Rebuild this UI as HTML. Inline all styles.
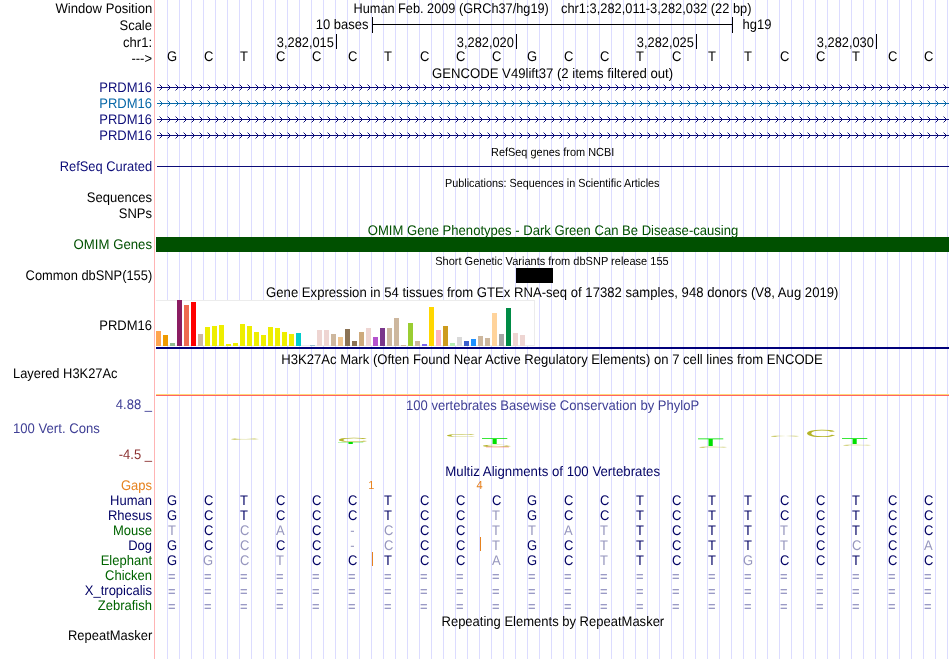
<!DOCTYPE html>
<html lang="en"><head><meta charset="utf-8"><title>UCSC Genome Browser chr1:3,282,011-3,282,032</title>
<style>html,body{margin:0;padding:0;background:#fff}svg{display:block;will-change:transform}</style></head>
<body>
<svg width="950" height="659" viewBox="0 0 950 659" font-family='"Liberation Sans", sans-serif' font-size="13" text-rendering="geometricPrecision">
<rect width="950" height="659" fill="#fff"/>
<path d="M167.5 0V659M179.5 0V659M191.5 0V659M203.5 0V659M215.5 0V659M227.5 0V659M239.5 0V659M251.5 0V659M263.5 0V659M275.5 0V659M287.5 0V659M299.5 0V659M311.5 0V659M323.5 0V659M335.5 0V659M347.5 0V659M359.5 0V659M371.5 0V659M383.5 0V659M395.5 0V659M407.5 0V659M419.5 0V659M431.5 0V659M443.5 0V659M455.5 0V659M467.5 0V659M479.5 0V659M491.5 0V659M503.5 0V659M515.5 0V659M527.5 0V659M539.5 0V659M551.5 0V659M563.5 0V659M575.5 0V659M587.5 0V659M599.5 0V659M611.5 0V659M623.5 0V659M635.5 0V659M647.5 0V659M659.5 0V659M671.5 0V659M683.5 0V659M695.5 0V659M707.5 0V659M719.5 0V659M731.5 0V659M743.5 0V659M755.5 0V659M767.5 0V659M779.5 0V659M791.5 0V659M803.5 0V659M815.5 0V659M827.5 0V659M839.5 0V659M851.5 0V659M863.5 0V659M875.5 0V659M887.5 0V659M899.5 0V659M911.5 0V659M923.5 0V659M935.5 0V659M947.5 0V659" stroke="#dcdcff" stroke-width="1" fill="none" shape-rendering="crispEdges"/>
<rect x="154" y="0" width="1" height="659" fill="#ffb4b4" shape-rendering="crispEdges"/>
<text transform="translate(55.5,12.8) scale(1,1.07)" fill="#000" textLength="96.7" lengthAdjust="spacingAndGlyphs">Window Position</text>
<text transform="translate(152,29.5) scale(1,1.07)" text-anchor="end" fill="#000">Scale</text>
<text transform="translate(152,46.5) scale(1,1.07)" text-anchor="end" fill="#000">chr1:</text>
<text transform="translate(152,63) scale(1,1.07)" text-anchor="end" fill="#000">---&gt;</text>
<text transform="translate(353.5,12.5) scale(1,1.07)" fill="#000" textLength="195.3" lengthAdjust="spacingAndGlyphs">Human Feb. 2009 (GRCh37/hg19)</text>
<text transform="translate(561.0,12.5) scale(1,1.07)" fill="#000" textLength="190.5" lengthAdjust="spacingAndGlyphs">chr1:3,282,011-3,282,032 (22 bp)</text>
<text transform="translate(368.5,29) scale(1,1.07)" text-anchor="end" fill="#000">10 bases</text>
<path d="M372.5 17V33M732.5 17V33M372 24.5H733" stroke="#000" stroke-width="1" fill="none" shape-rendering="crispEdges"/>
<text transform="translate(742.5,29) scale(1,1.07)" fill="#000">hg19</text>
<rect x="336" y="34" width="1" height="15" fill="#000" shape-rendering="crispEdges"/>
<text transform="translate(276.8,46.5) scale(1,1.07)" fill="#000" textLength="57.1" lengthAdjust="spacingAndGlyphs">3,282,015</text>
<rect x="516" y="34" width="1" height="15" fill="#000" shape-rendering="crispEdges"/>
<text transform="translate(456.8,46.5) scale(1,1.07)" fill="#000" textLength="57.1" lengthAdjust="spacingAndGlyphs">3,282,020</text>
<rect x="696" y="34" width="1" height="15" fill="#000" shape-rendering="crispEdges"/>
<text transform="translate(636.8,46.5) scale(1,1.07)" fill="#000" textLength="57.1" lengthAdjust="spacingAndGlyphs">3,282,025</text>
<rect x="876" y="34" width="1" height="15" fill="#000" shape-rendering="crispEdges"/>
<text transform="translate(816.8,46.5) scale(1,1.07)" fill="#000" textLength="57.1" lengthAdjust="spacingAndGlyphs">3,282,030</text>
<text transform="translate(172.05,60.7) scale(1,1.07)" text-anchor="middle" fill="#000">G</text>
<text transform="translate(208.7,60.7) scale(1,1.07)" text-anchor="middle" fill="#000">C</text>
<text transform="translate(244.0,60.7) scale(1,1.07)" text-anchor="middle" fill="#000">T</text>
<text transform="translate(280.7,60.7) scale(1,1.07)" text-anchor="middle" fill="#000">C</text>
<text transform="translate(316.7,60.7) scale(1,1.07)" text-anchor="middle" fill="#000">C</text>
<text transform="translate(352.7,60.7) scale(1,1.07)" text-anchor="middle" fill="#000">C</text>
<text transform="translate(388.0,60.7) scale(1,1.07)" text-anchor="middle" fill="#000">T</text>
<text transform="translate(424.7,60.7) scale(1,1.07)" text-anchor="middle" fill="#000">C</text>
<text transform="translate(460.7,60.7) scale(1,1.07)" text-anchor="middle" fill="#000">C</text>
<text transform="translate(496.7,60.7) scale(1,1.07)" text-anchor="middle" fill="#000">C</text>
<text transform="translate(532.05,60.7) scale(1,1.07)" text-anchor="middle" fill="#000">G</text>
<text transform="translate(568.7,60.7) scale(1,1.07)" text-anchor="middle" fill="#000">C</text>
<text transform="translate(604.7,60.7) scale(1,1.07)" text-anchor="middle" fill="#000">C</text>
<text transform="translate(640.0,60.7) scale(1,1.07)" text-anchor="middle" fill="#000">T</text>
<text transform="translate(676.7,60.7) scale(1,1.07)" text-anchor="middle" fill="#000">C</text>
<text transform="translate(712.0,60.7) scale(1,1.07)" text-anchor="middle" fill="#000">T</text>
<text transform="translate(748.0,60.7) scale(1,1.07)" text-anchor="middle" fill="#000">T</text>
<text transform="translate(784.7,60.7) scale(1,1.07)" text-anchor="middle" fill="#000">C</text>
<text transform="translate(820.7,60.7) scale(1,1.07)" text-anchor="middle" fill="#000">C</text>
<text transform="translate(856.0,60.7) scale(1,1.07)" text-anchor="middle" fill="#000">T</text>
<text transform="translate(892.7,60.7) scale(1,1.07)" text-anchor="middle" fill="#000">C</text>
<text transform="translate(928.7,60.7) scale(1,1.07)" text-anchor="middle" fill="#000">C</text>
<text transform="translate(432.0,77.6) scale(1,1.07)" fill="#000" textLength="241.1" lengthAdjust="spacingAndGlyphs">GENCODE V49lift37 (2 items filtered out)</text>
<text transform="translate(152,92) scale(1,1.07)" text-anchor="end" fill="#0c0c78">PRDM16</text>
<pattern id="cv0" x="155" y="0" width="8" height="7" patternUnits="userSpaceOnUse"><path d="M0 3h8v1h-8zM6 2h1v1h-1zM5 1h1v1h-1zM6 4h1v1h-1zM5 5h1v1h-1z" fill="#0c0c78"/><path d="M4 0h1v1h-1zM4 6h1v1h-1z" fill="#0c0c78" fill-opacity=".45"/></pattern>
<rect transform="translate(0,84)" x="157" y="0" width="792" height="7" fill="url(#cv0)" shape-rendering="crispEdges"/>
<text transform="translate(152,108) scale(1,1.07)" text-anchor="end" fill="#0868a8">PRDM16</text>
<pattern id="cv1" x="155" y="0" width="8" height="7" patternUnits="userSpaceOnUse"><path d="M0 3h8v1h-8zM6 2h1v1h-1zM5 1h1v1h-1zM6 4h1v1h-1zM5 5h1v1h-1z" fill="#0868a8"/><path d="M4 0h1v1h-1zM4 6h1v1h-1z" fill="#0868a8" fill-opacity=".45"/></pattern>
<rect transform="translate(0,100)" x="157" y="0" width="792" height="7" fill="url(#cv1)" shape-rendering="crispEdges"/>
<text transform="translate(152,124) scale(1,1.07)" text-anchor="end" fill="#0c0c78">PRDM16</text>
<pattern id="cv2" x="155" y="0" width="8" height="7" patternUnits="userSpaceOnUse"><path d="M0 3h8v1h-8zM6 2h1v1h-1zM5 1h1v1h-1zM6 4h1v1h-1zM5 5h1v1h-1z" fill="#0c0c78"/><path d="M4 0h1v1h-1zM4 6h1v1h-1z" fill="#0c0c78" fill-opacity=".45"/></pattern>
<rect transform="translate(0,116)" x="157" y="0" width="792" height="7" fill="url(#cv2)" shape-rendering="crispEdges"/>
<text transform="translate(152,140) scale(1,1.07)" text-anchor="end" fill="#0c0c78">PRDM16</text>
<pattern id="cv3" x="155" y="0" width="8" height="7" patternUnits="userSpaceOnUse"><path d="M0 3h8v1h-8zM6 2h1v1h-1zM5 1h1v1h-1zM6 4h1v1h-1zM5 5h1v1h-1z" fill="#0c0c78"/><path d="M4 0h1v1h-1zM4 6h1v1h-1z" fill="#0c0c78" fill-opacity=".45"/></pattern>
<rect transform="translate(0,132)" x="157" y="0" width="792" height="7" fill="url(#cv3)" shape-rendering="crispEdges"/>
<text transform="translate(491.0,156) scale(1,1.07)" fill="#000" font-size="11" textLength="123.3" lengthAdjust="spacingAndGlyphs">RefSeq genes from NCBI</text>
<text transform="translate(59.7,171) scale(1,1.07)" fill="#0c0c78" textLength="92.5" lengthAdjust="spacingAndGlyphs">RefSeq Curated</text>
<rect x="157" y="166" width="792" height="1" fill="#0c0c78" shape-rendering="crispEdges"/>
<text transform="translate(445.0,186.5) scale(1,1.07)" fill="#000" font-size="11" textLength="214.5" lengthAdjust="spacingAndGlyphs">Publications: Sequences in Scientific Articles</text>
<text transform="translate(86.7,202) scale(1,1.07)" fill="#000" textLength="65.3" lengthAdjust="spacingAndGlyphs">Sequences</text>
<text transform="translate(152,217.5) scale(1,1.07)" text-anchor="end" fill="#000">SNPs</text>
<text transform="translate(367.8,235) scale(1,1.07)" fill="#005000" textLength="370.5" lengthAdjust="spacingAndGlyphs">OMIM Gene Phenotypes - Dark Green Can Be Disease-causing</text>
<text transform="translate(73.6,248.6) scale(1,1.07)" fill="#005000" textLength="78.4" lengthAdjust="spacingAndGlyphs">OMIM Genes</text>
<rect x="156" y="237" width="793" height="15" fill="#005000" shape-rendering="crispEdges"/>
<text transform="translate(435.2,264.6) scale(1,1.07)" fill="#000" font-size="11" textLength="233.5" lengthAdjust="spacingAndGlyphs">Short Genetic Variants from dbSNP release 155</text>
<text transform="translate(25.6,279.8) scale(1,1.07)" fill="#000" textLength="126.6" lengthAdjust="spacingAndGlyphs">Common dbSNP(155)</text>
<rect x="516" y="268" width="37" height="15" fill="#000" shape-rendering="crispEdges"/>
<text transform="translate(266.1,296.6) scale(1,1.07)" fill="#000" textLength="572.3" lengthAdjust="spacingAndGlyphs">Gene Expression in 54 tissues from GTEx RNA-seq of 17382 samples, 948 donors (V8, Aug 2019)</text>
<text transform="translate(152,329.5) scale(1,1.07)" text-anchor="end" fill="#000">PRDM16</text>
<rect x="156" y="300" width="379" height="46" fill="#fff" shape-rendering="crispEdges"/>
<path d="M156 300.5H534.5V345.5H156" stroke="#ececec" fill="none" shape-rendering="crispEdges"/>
<rect x="156" y="331" width="5" height="15" fill="#FFA54F" shape-rendering="crispEdges"/>
<rect x="163" y="335" width="5" height="11" fill="#EE9A00" shape-rendering="crispEdges"/>
<rect x="170" y="343" width="5" height="3" fill="#8FBC8F" shape-rendering="crispEdges"/>
<rect x="177" y="300" width="5" height="46" fill="#8B1C62" shape-rendering="crispEdges"/>
<rect x="184" y="305" width="5" height="41" fill="#EE6A50" shape-rendering="crispEdges"/>
<rect x="191" y="302" width="5" height="44" fill="#FF0000" shape-rendering="crispEdges"/>
<rect x="198" y="334" width="5" height="12" fill="#CDB79E" shape-rendering="crispEdges"/>
<rect x="205" y="327" width="5" height="19" fill="#EEEE00" shape-rendering="crispEdges"/>
<rect x="212" y="326" width="5" height="20" fill="#EEEE00" shape-rendering="crispEdges"/>
<rect x="219" y="325" width="5" height="21" fill="#EEEE00" shape-rendering="crispEdges"/>
<rect x="226" y="344" width="5" height="2" fill="#EEEE00" shape-rendering="crispEdges"/>
<rect x="233" y="343" width="5" height="3" fill="#EEEE00" shape-rendering="crispEdges"/>
<rect x="240" y="324" width="5" height="22" fill="#EEEE00" shape-rendering="crispEdges"/>
<rect x="247" y="326" width="5" height="20" fill="#EEEE00" shape-rendering="crispEdges"/>
<rect x="254" y="332" width="5" height="14" fill="#EEEE00" shape-rendering="crispEdges"/>
<rect x="261" y="335" width="5" height="11" fill="#EEEE00" shape-rendering="crispEdges"/>
<rect x="268" y="327" width="5" height="19" fill="#EEEE00" shape-rendering="crispEdges"/>
<rect x="275" y="328" width="5" height="18" fill="#EEEE00" shape-rendering="crispEdges"/>
<rect x="282" y="332" width="5" height="14" fill="#EEEE00" shape-rendering="crispEdges"/>
<rect x="289" y="334" width="5" height="12" fill="#EEEE00" shape-rendering="crispEdges"/>
<rect x="296" y="333" width="5" height="13" fill="#00CDCD" shape-rendering="crispEdges"/>
<rect x="310" y="345" width="5" height="1" fill="#9AC0CD" shape-rendering="crispEdges"/>
<rect x="317" y="330" width="5" height="16" fill="#EED5D2" shape-rendering="crispEdges"/>
<rect x="324" y="330" width="5" height="16" fill="#EED5D2" shape-rendering="crispEdges"/>
<rect x="331" y="334" width="5" height="12" fill="#CDB79E" shape-rendering="crispEdges"/>
<rect x="338" y="337" width="5" height="9" fill="#EEC591" shape-rendering="crispEdges"/>
<rect x="345" y="329" width="5" height="17" fill="#8B7355" shape-rendering="crispEdges"/>
<rect x="352" y="341" width="5" height="5" fill="#8B7355" shape-rendering="crispEdges"/>
<rect x="359" y="332" width="5" height="14" fill="#CDAA7D" shape-rendering="crispEdges"/>
<rect x="366" y="328" width="5" height="18" fill="#EED5D2" shape-rendering="crispEdges"/>
<rect x="373" y="337" width="5" height="9" fill="#B452CD" shape-rendering="crispEdges"/>
<rect x="380" y="328" width="5" height="18" fill="#7A378B" shape-rendering="crispEdges"/>
<rect x="387" y="328" width="5" height="18" fill="#CDB79E" shape-rendering="crispEdges"/>
<rect x="394" y="318" width="5" height="28" fill="#CDB79E" shape-rendering="crispEdges"/>
<rect x="401" y="345" width="5" height="1" fill="#CDB79E" shape-rendering="crispEdges"/>
<rect x="408" y="323" width="5" height="23" fill="#9ACD32" shape-rendering="crispEdges"/>
<rect x="415" y="341" width="5" height="5" fill="#CDB79E" shape-rendering="crispEdges"/>
<rect x="422" y="344" width="5" height="2" fill="#7A67EE" shape-rendering="crispEdges"/>
<rect x="429" y="307" width="5" height="39" fill="#FFD700" shape-rendering="crispEdges"/>
<rect x="436" y="330" width="5" height="16" fill="#FFB6C1" shape-rendering="crispEdges"/>
<rect x="443" y="326" width="5" height="20" fill="#CD9B1D" shape-rendering="crispEdges"/>
<rect x="450" y="343" width="5" height="3" fill="#B4EEB4" shape-rendering="crispEdges"/>
<rect x="457" y="337" width="5" height="9" fill="#D9D9D9" shape-rendering="crispEdges"/>
<rect x="464" y="341" width="5" height="5" fill="#3A5FCD" shape-rendering="crispEdges"/>
<rect x="471" y="339" width="5" height="7" fill="#1E90FF" shape-rendering="crispEdges"/>
<rect x="478" y="336" width="5" height="10" fill="#CDB79E" shape-rendering="crispEdges"/>
<rect x="485" y="338" width="5" height="8" fill="#CDB79E" shape-rendering="crispEdges"/>
<rect x="492" y="313" width="5" height="33" fill="#FFD39B" shape-rendering="crispEdges"/>
<rect x="499" y="334" width="5" height="12" fill="#A6A6A6" shape-rendering="crispEdges"/>
<rect x="506" y="308" width="5" height="38" fill="#008B45" shape-rendering="crispEdges"/>
<rect x="513" y="333" width="5" height="13" fill="#EED5D2" shape-rendering="crispEdges"/>
<rect x="520" y="335" width="5" height="11" fill="#EED5D2" shape-rendering="crispEdges"/>
<rect x="156" y="347" width="793" height="2" fill="#00007a" shape-rendering="crispEdges"/>
<text transform="translate(281.2,363.5) scale(1,1.07)" fill="#000" textLength="541.6" lengthAdjust="spacingAndGlyphs">H3K27Ac Mark (Often Found Near Active Regulatory Elements) on 7 cell lines from ENCODE</text>
<text transform="translate(13.0,378) scale(1,1.07)" fill="#000" textLength="104.5" lengthAdjust="spacingAndGlyphs">Layered H3K27Ac</text>
<rect x="156" y="394" width="793" height="1" fill="#ffd878" shape-rendering="crispEdges"/>
<rect x="156" y="395" width="793" height="1" fill="#ff6464" shape-rendering="crispEdges"/>
<text transform="translate(406.0,409.5) scale(1,1.07)" fill="#404096" textLength="293.2" lengthAdjust="spacingAndGlyphs">100 vertebrates Basewise Conservation by PhyloP</text>
<text transform="translate(152,408.5) scale(1,1.07)" text-anchor="end" fill="#404096">4.88 _</text>
<text transform="translate(13.0,433) scale(1,1.07)" fill="#404096" textLength="86.8" lengthAdjust="spacingAndGlyphs">100 Vert. Cons</text>
<text transform="translate(152,458.5) scale(1,1.07)" text-anchor="end" fill="#8c3232">-4.5 _</text>
<text transform="translate(228.78,440) scale(4.435,0.270)" font-size="10" fill="#b4b428" fill-opacity="0.8">C</text>
<text transform="translate(336.78,442) scale(4.435,0.608)" font-size="10" fill="#b4b428" fill-opacity="1">C</text>
<text transform="translate(337.11,444) scale(4.474,0.279)" font-size="10" fill="#00e000" fill-opacity="1">T</text>
<text transform="translate(444.78,437.2) scale(4.435,0.419)" font-size="10" fill="#b4b428" fill-opacity="1">C</text>
<text transform="translate(481.11,444) scale(4.474,0.838)" font-size="10" fill="#00e000" fill-opacity="1">T</text>
<text transform="translate(480.78,446.9) scale(4.435,0.324)" font-size="10" fill="#b4b428" fill-opacity="1">C</text>
<rect x="486" y="446.7" width="23" height="0.8" fill="#ff5050" fill-opacity=".45"/>
<text transform="translate(697.11,446.3) scale(4.474,1.089)" font-size="10" fill="#00e000" fill-opacity="1">T</text>
<text transform="translate(696.78,447.8) scale(4.435,0.203)" font-size="10" fill="#b4b428" fill-opacity="0.7">C</text>
<text transform="translate(768.78,437) scale(4.435,0.189)" font-size="10" fill="#b4b428" fill-opacity="0.7">C</text>
<text transform="translate(804.78,437) scale(4.435,1.054)" font-size="10" fill="#b4b428" fill-opacity="1">C</text>
<text transform="translate(841.11,444) scale(4.474,0.838)" font-size="10" fill="#00e000" fill-opacity="1">T</text>
<text transform="translate(840.78,445.5) scale(4.435,0.203)" font-size="10" fill="#b4b428" fill-opacity="0.6">C</text>
<text transform="translate(445.3,475.5) scale(1,1.07)" fill="#000064" textLength="214.8" lengthAdjust="spacingAndGlyphs">Multiz Alignments of 100 Vertebrates</text>
<text transform="translate(152,490) scale(1,1.07)" text-anchor="end" fill="#e6821e">Gaps</text>
<text transform="translate(371.3,489.1) scale(1,1.07)" text-anchor="middle" fill="#e6821e" font-size="11">1</text>
<text transform="translate(479.5,489.1) scale(1,1.07)" text-anchor="middle" fill="#e6821e" font-size="11">4</text>
<rect x="372" y="552" width="1" height="14" fill="#e6821e" shape-rendering="crispEdges"/>
<rect x="480" y="537" width="1" height="14" fill="#e6821e" shape-rendering="crispEdges"/>
<text transform="translate(152,505) scale(1,1.07)" text-anchor="end" fill="#000064">Human</text>
<text transform="translate(172.05,504.5) scale(1,1.07)" text-anchor="middle" fill="#000064">G</text>
<text transform="translate(208.7,504.5) scale(1,1.07)" text-anchor="middle" fill="#000064">C</text>
<text transform="translate(244.0,504.5) scale(1,1.07)" text-anchor="middle" fill="#000064">T</text>
<text transform="translate(280.7,504.5) scale(1,1.07)" text-anchor="middle" fill="#000064">C</text>
<text transform="translate(316.7,504.5) scale(1,1.07)" text-anchor="middle" fill="#000064">C</text>
<text transform="translate(352.7,504.5) scale(1,1.07)" text-anchor="middle" fill="#000064">C</text>
<text transform="translate(388.0,504.5) scale(1,1.07)" text-anchor="middle" fill="#000064">T</text>
<text transform="translate(424.7,504.5) scale(1,1.07)" text-anchor="middle" fill="#000064">C</text>
<text transform="translate(460.7,504.5) scale(1,1.07)" text-anchor="middle" fill="#000064">C</text>
<text transform="translate(496.7,504.5) scale(1,1.07)" text-anchor="middle" fill="#000064">C</text>
<text transform="translate(532.05,504.5) scale(1,1.07)" text-anchor="middle" fill="#000064">G</text>
<text transform="translate(568.7,504.5) scale(1,1.07)" text-anchor="middle" fill="#000064">C</text>
<text transform="translate(604.7,504.5) scale(1,1.07)" text-anchor="middle" fill="#000064">C</text>
<text transform="translate(640.0,504.5) scale(1,1.07)" text-anchor="middle" fill="#000064">T</text>
<text transform="translate(676.7,504.5) scale(1,1.07)" text-anchor="middle" fill="#000064">C</text>
<text transform="translate(712.0,504.5) scale(1,1.07)" text-anchor="middle" fill="#000064">T</text>
<text transform="translate(748.0,504.5) scale(1,1.07)" text-anchor="middle" fill="#000064">T</text>
<text transform="translate(784.7,504.5) scale(1,1.07)" text-anchor="middle" fill="#000064">C</text>
<text transform="translate(820.7,504.5) scale(1,1.07)" text-anchor="middle" fill="#000064">C</text>
<text transform="translate(856.0,504.5) scale(1,1.07)" text-anchor="middle" fill="#000064">T</text>
<text transform="translate(892.7,504.5) scale(1,1.07)" text-anchor="middle" fill="#000064">C</text>
<text transform="translate(928.7,504.5) scale(1,1.07)" text-anchor="middle" fill="#000064">C</text>
<text transform="translate(152,520) scale(1,1.07)" text-anchor="end" fill="#000064">Rhesus</text>
<text transform="translate(172.05,519.5) scale(1,1.07)" text-anchor="middle" fill="#000064">G</text>
<text transform="translate(208.7,519.5) scale(1,1.07)" text-anchor="middle" fill="#000064">C</text>
<text transform="translate(244.0,519.5) scale(1,1.07)" text-anchor="middle" fill="#000064">T</text>
<text transform="translate(280.7,519.5) scale(1,1.07)" text-anchor="middle" fill="#000064">C</text>
<text transform="translate(316.7,519.5) scale(1,1.07)" text-anchor="middle" fill="#000064">C</text>
<text transform="translate(352.7,519.5) scale(1,1.07)" text-anchor="middle" fill="#000064">C</text>
<text transform="translate(388.0,519.5) scale(1,1.07)" text-anchor="middle" fill="#000064">T</text>
<text transform="translate(424.7,519.5) scale(1,1.07)" text-anchor="middle" fill="#000064">C</text>
<text transform="translate(460.7,519.5) scale(1,1.07)" text-anchor="middle" fill="#000064">C</text>
<text transform="translate(496.0,519.5) scale(1,1.07)" text-anchor="middle" fill="#9696be">T</text>
<text transform="translate(532.05,519.5) scale(1,1.07)" text-anchor="middle" fill="#000064">G</text>
<text transform="translate(568.7,519.5) scale(1,1.07)" text-anchor="middle" fill="#000064">C</text>
<text transform="translate(604.7,519.5) scale(1,1.07)" text-anchor="middle" fill="#000064">C</text>
<text transform="translate(640.0,519.5) scale(1,1.07)" text-anchor="middle" fill="#000064">T</text>
<text transform="translate(676.7,519.5) scale(1,1.07)" text-anchor="middle" fill="#000064">C</text>
<text transform="translate(712.0,519.5) scale(1,1.07)" text-anchor="middle" fill="#000064">T</text>
<text transform="translate(748.0,519.5) scale(1,1.07)" text-anchor="middle" fill="#000064">T</text>
<text transform="translate(784.7,519.5) scale(1,1.07)" text-anchor="middle" fill="#000064">C</text>
<text transform="translate(820.7,519.5) scale(1,1.07)" text-anchor="middle" fill="#000064">C</text>
<text transform="translate(856.0,519.5) scale(1,1.07)" text-anchor="middle" fill="#000064">T</text>
<text transform="translate(892.7,519.5) scale(1,1.07)" text-anchor="middle" fill="#000064">C</text>
<text transform="translate(928.7,519.5) scale(1,1.07)" text-anchor="middle" fill="#000064">C</text>
<text transform="translate(152,535) scale(1,1.07)" text-anchor="end" fill="#006400">Mouse</text>
<text transform="translate(172.0,534.5) scale(1,1.07)" text-anchor="middle" fill="#9696be">T</text>
<text transform="translate(208.7,534.5) scale(1,1.07)" text-anchor="middle" fill="#000064">C</text>
<text transform="translate(244.7,534.5) scale(1,1.07)" text-anchor="middle" fill="#9696be">C</text>
<text transform="translate(280.4,534.5) scale(1,1.07)" text-anchor="middle" fill="#9696be">A</text>
<text transform="translate(316.7,534.5) scale(1,1.07)" text-anchor="middle" fill="#000064">C</text>
<text transform="translate(352.3,534.5) scale(1,1.07)" text-anchor="middle" fill="#9696be">-</text>
<text transform="translate(388.7,534.5) scale(1,1.07)" text-anchor="middle" fill="#9696be">C</text>
<text transform="translate(424.7,534.5) scale(1,1.07)" text-anchor="middle" fill="#000064">C</text>
<text transform="translate(460.7,534.5) scale(1,1.07)" text-anchor="middle" fill="#000064">C</text>
<text transform="translate(496.0,534.5) scale(1,1.07)" text-anchor="middle" fill="#9696be">T</text>
<text transform="translate(532.0,534.5) scale(1,1.07)" text-anchor="middle" fill="#9696be">T</text>
<text transform="translate(568.4,534.5) scale(1,1.07)" text-anchor="middle" fill="#9696be">A</text>
<text transform="translate(604.0,534.5) scale(1,1.07)" text-anchor="middle" fill="#9696be">T</text>
<text transform="translate(640.0,534.5) scale(1,1.07)" text-anchor="middle" fill="#000064">T</text>
<text transform="translate(676.7,534.5) scale(1,1.07)" text-anchor="middle" fill="#000064">C</text>
<text transform="translate(712.0,534.5) scale(1,1.07)" text-anchor="middle" fill="#000064">T</text>
<text transform="translate(748.0,534.5) scale(1,1.07)" text-anchor="middle" fill="#000064">T</text>
<text transform="translate(784.0,534.5) scale(1,1.07)" text-anchor="middle" fill="#9696be">T</text>
<text transform="translate(820.7,534.5) scale(1,1.07)" text-anchor="middle" fill="#000064">C</text>
<text transform="translate(856.0,534.5) scale(1,1.07)" text-anchor="middle" fill="#000064">T</text>
<text transform="translate(892.7,534.5) scale(1,1.07)" text-anchor="middle" fill="#000064">C</text>
<text transform="translate(928.7,534.5) scale(1,1.07)" text-anchor="middle" fill="#000064">C</text>
<text transform="translate(152,550) scale(1,1.07)" text-anchor="end" fill="#000064">Dog</text>
<text transform="translate(172.05,549.5) scale(1,1.07)" text-anchor="middle" fill="#000064">G</text>
<text transform="translate(208.7,549.5) scale(1,1.07)" text-anchor="middle" fill="#000064">C</text>
<text transform="translate(244.7,549.5) scale(1,1.07)" text-anchor="middle" fill="#9696be">C</text>
<text transform="translate(280.7,549.5) scale(1,1.07)" text-anchor="middle" fill="#000064">C</text>
<text transform="translate(316.7,549.5) scale(1,1.07)" text-anchor="middle" fill="#000064">C</text>
<text transform="translate(352.3,549.5) scale(1,1.07)" text-anchor="middle" fill="#9696be">-</text>
<text transform="translate(388.7,549.5) scale(1,1.07)" text-anchor="middle" fill="#9696be">C</text>
<text transform="translate(424.7,549.5) scale(1,1.07)" text-anchor="middle" fill="#000064">C</text>
<text transform="translate(460.7,549.5) scale(1,1.07)" text-anchor="middle" fill="#000064">C</text>
<text transform="translate(496.0,549.5) scale(1,1.07)" text-anchor="middle" fill="#9696be">T</text>
<text transform="translate(532.05,549.5) scale(1,1.07)" text-anchor="middle" fill="#000064">G</text>
<text transform="translate(568.7,549.5) scale(1,1.07)" text-anchor="middle" fill="#000064">C</text>
<text transform="translate(604.0,549.5) scale(1,1.07)" text-anchor="middle" fill="#9696be">T</text>
<text transform="translate(640.0,549.5) scale(1,1.07)" text-anchor="middle" fill="#000064">T</text>
<text transform="translate(676.7,549.5) scale(1,1.07)" text-anchor="middle" fill="#000064">C</text>
<text transform="translate(712.0,549.5) scale(1,1.07)" text-anchor="middle" fill="#000064">T</text>
<text transform="translate(748.0,549.5) scale(1,1.07)" text-anchor="middle" fill="#000064">T</text>
<text transform="translate(784.0,549.5) scale(1,1.07)" text-anchor="middle" fill="#9696be">T</text>
<text transform="translate(820.7,549.5) scale(1,1.07)" text-anchor="middle" fill="#000064">C</text>
<text transform="translate(856.7,549.5) scale(1,1.07)" text-anchor="middle" fill="#9696be">C</text>
<text transform="translate(892.7,549.5) scale(1,1.07)" text-anchor="middle" fill="#000064">C</text>
<text transform="translate(928.4,549.5) scale(1,1.07)" text-anchor="middle" fill="#9696be">A</text>
<text transform="translate(152,565) scale(1,1.07)" text-anchor="end" fill="#006400">Elephant</text>
<text transform="translate(172.05,564.5) scale(1,1.07)" text-anchor="middle" fill="#000064">G</text>
<text transform="translate(208.05,564.5) scale(1,1.07)" text-anchor="middle" fill="#9696be">G</text>
<text transform="translate(244.7,564.5) scale(1,1.07)" text-anchor="middle" fill="#9696be">C</text>
<text transform="translate(280.0,564.5) scale(1,1.07)" text-anchor="middle" fill="#9696be">T</text>
<text transform="translate(316.7,564.5) scale(1,1.07)" text-anchor="middle" fill="#000064">C</text>
<text transform="translate(352.7,564.5) scale(1,1.07)" text-anchor="middle" fill="#000064">C</text>
<text transform="translate(388.0,564.5) scale(1,1.07)" text-anchor="middle" fill="#000064">T</text>
<text transform="translate(424.7,564.5) scale(1,1.07)" text-anchor="middle" fill="#000064">C</text>
<text transform="translate(460.7,564.5) scale(1,1.07)" text-anchor="middle" fill="#000064">C</text>
<text transform="translate(496.4,564.5) scale(1,1.07)" text-anchor="middle" fill="#9696be">A</text>
<text transform="translate(532.05,564.5) scale(1,1.07)" text-anchor="middle" fill="#000064">G</text>
<text transform="translate(568.7,564.5) scale(1,1.07)" text-anchor="middle" fill="#000064">C</text>
<text transform="translate(604.0,564.5) scale(1,1.07)" text-anchor="middle" fill="#9696be">T</text>
<text transform="translate(640.0,564.5) scale(1,1.07)" text-anchor="middle" fill="#000064">T</text>
<text transform="translate(676.7,564.5) scale(1,1.07)" text-anchor="middle" fill="#000064">C</text>
<text transform="translate(712.0,564.5) scale(1,1.07)" text-anchor="middle" fill="#000064">T</text>
<text transform="translate(748.05,564.5) scale(1,1.07)" text-anchor="middle" fill="#9696be">G</text>
<text transform="translate(784.7,564.5) scale(1,1.07)" text-anchor="middle" fill="#000064">C</text>
<text transform="translate(820.7,564.5) scale(1,1.07)" text-anchor="middle" fill="#000064">C</text>
<text transform="translate(856.0,564.5) scale(1,1.07)" text-anchor="middle" fill="#000064">T</text>
<text transform="translate(892.7,564.5) scale(1,1.07)" text-anchor="middle" fill="#000064">C</text>
<text transform="translate(928.7,564.5) scale(1,1.07)" text-anchor="middle" fill="#000064">C</text>
<text transform="translate(152,580) scale(1,1.07)" text-anchor="end" fill="#006400">Chicken</text>
<text transform="translate(171.9,581.2) scale(1,1.07)" text-anchor="middle" fill="#7c7cb4">=</text>
<text transform="translate(207.9,581.2) scale(1,1.07)" text-anchor="middle" fill="#7c7cb4">=</text>
<text transform="translate(243.9,581.2) scale(1,1.07)" text-anchor="middle" fill="#7c7cb4">=</text>
<text transform="translate(279.9,581.2) scale(1,1.07)" text-anchor="middle" fill="#7c7cb4">=</text>
<text transform="translate(315.9,581.2) scale(1,1.07)" text-anchor="middle" fill="#7c7cb4">=</text>
<text transform="translate(351.9,581.2) scale(1,1.07)" text-anchor="middle" fill="#7c7cb4">=</text>
<text transform="translate(387.9,581.2) scale(1,1.07)" text-anchor="middle" fill="#7c7cb4">=</text>
<text transform="translate(423.9,581.2) scale(1,1.07)" text-anchor="middle" fill="#7c7cb4">=</text>
<text transform="translate(459.9,581.2) scale(1,1.07)" text-anchor="middle" fill="#7c7cb4">=</text>
<text transform="translate(495.9,581.2) scale(1,1.07)" text-anchor="middle" fill="#7c7cb4">=</text>
<text transform="translate(531.9,581.2) scale(1,1.07)" text-anchor="middle" fill="#7c7cb4">=</text>
<text transform="translate(567.9,581.2) scale(1,1.07)" text-anchor="middle" fill="#7c7cb4">=</text>
<text transform="translate(603.9,581.2) scale(1,1.07)" text-anchor="middle" fill="#7c7cb4">=</text>
<text transform="translate(639.9,581.2) scale(1,1.07)" text-anchor="middle" fill="#7c7cb4">=</text>
<text transform="translate(675.9,581.2) scale(1,1.07)" text-anchor="middle" fill="#7c7cb4">=</text>
<text transform="translate(711.9,581.2) scale(1,1.07)" text-anchor="middle" fill="#7c7cb4">=</text>
<text transform="translate(747.9,581.2) scale(1,1.07)" text-anchor="middle" fill="#7c7cb4">=</text>
<text transform="translate(783.9,581.2) scale(1,1.07)" text-anchor="middle" fill="#7c7cb4">=</text>
<text transform="translate(819.9,581.2) scale(1,1.07)" text-anchor="middle" fill="#7c7cb4">=</text>
<text transform="translate(855.9,581.2) scale(1,1.07)" text-anchor="middle" fill="#7c7cb4">=</text>
<text transform="translate(891.9,581.2) scale(1,1.07)" text-anchor="middle" fill="#7c7cb4">=</text>
<text transform="translate(927.9,581.2) scale(1,1.07)" text-anchor="middle" fill="#7c7cb4">=</text>
<text transform="translate(152,595) scale(1,1.07)" text-anchor="end" fill="#000064">X_tropicalis</text>
<text transform="translate(171.9,596.2) scale(1,1.07)" text-anchor="middle" fill="#7c7cb4">=</text>
<text transform="translate(207.9,596.2) scale(1,1.07)" text-anchor="middle" fill="#7c7cb4">=</text>
<text transform="translate(243.9,596.2) scale(1,1.07)" text-anchor="middle" fill="#7c7cb4">=</text>
<text transform="translate(279.9,596.2) scale(1,1.07)" text-anchor="middle" fill="#7c7cb4">=</text>
<text transform="translate(315.9,596.2) scale(1,1.07)" text-anchor="middle" fill="#7c7cb4">=</text>
<text transform="translate(351.9,596.2) scale(1,1.07)" text-anchor="middle" fill="#7c7cb4">=</text>
<text transform="translate(387.9,596.2) scale(1,1.07)" text-anchor="middle" fill="#7c7cb4">=</text>
<text transform="translate(423.9,596.2) scale(1,1.07)" text-anchor="middle" fill="#7c7cb4">=</text>
<text transform="translate(459.9,596.2) scale(1,1.07)" text-anchor="middle" fill="#7c7cb4">=</text>
<text transform="translate(495.9,596.2) scale(1,1.07)" text-anchor="middle" fill="#7c7cb4">=</text>
<text transform="translate(531.9,596.2) scale(1,1.07)" text-anchor="middle" fill="#7c7cb4">=</text>
<text transform="translate(567.9,596.2) scale(1,1.07)" text-anchor="middle" fill="#7c7cb4">=</text>
<text transform="translate(603.9,596.2) scale(1,1.07)" text-anchor="middle" fill="#7c7cb4">=</text>
<text transform="translate(639.9,596.2) scale(1,1.07)" text-anchor="middle" fill="#7c7cb4">=</text>
<text transform="translate(675.9,596.2) scale(1,1.07)" text-anchor="middle" fill="#7c7cb4">=</text>
<text transform="translate(711.9,596.2) scale(1,1.07)" text-anchor="middle" fill="#7c7cb4">=</text>
<text transform="translate(747.9,596.2) scale(1,1.07)" text-anchor="middle" fill="#7c7cb4">=</text>
<text transform="translate(783.9,596.2) scale(1,1.07)" text-anchor="middle" fill="#7c7cb4">=</text>
<text transform="translate(819.9,596.2) scale(1,1.07)" text-anchor="middle" fill="#7c7cb4">=</text>
<text transform="translate(855.9,596.2) scale(1,1.07)" text-anchor="middle" fill="#7c7cb4">=</text>
<text transform="translate(891.9,596.2) scale(1,1.07)" text-anchor="middle" fill="#7c7cb4">=</text>
<text transform="translate(927.9,596.2) scale(1,1.07)" text-anchor="middle" fill="#7c7cb4">=</text>
<text transform="translate(152,610) scale(1,1.07)" text-anchor="end" fill="#006400">Zebrafish</text>
<text transform="translate(171.9,611.2) scale(1,1.07)" text-anchor="middle" fill="#7c7cb4">=</text>
<text transform="translate(207.9,611.2) scale(1,1.07)" text-anchor="middle" fill="#7c7cb4">=</text>
<text transform="translate(243.9,611.2) scale(1,1.07)" text-anchor="middle" fill="#7c7cb4">=</text>
<text transform="translate(279.9,611.2) scale(1,1.07)" text-anchor="middle" fill="#7c7cb4">=</text>
<text transform="translate(315.9,611.2) scale(1,1.07)" text-anchor="middle" fill="#7c7cb4">=</text>
<text transform="translate(351.9,611.2) scale(1,1.07)" text-anchor="middle" fill="#7c7cb4">=</text>
<text transform="translate(387.9,611.2) scale(1,1.07)" text-anchor="middle" fill="#7c7cb4">=</text>
<text transform="translate(423.9,611.2) scale(1,1.07)" text-anchor="middle" fill="#7c7cb4">=</text>
<text transform="translate(459.9,611.2) scale(1,1.07)" text-anchor="middle" fill="#7c7cb4">=</text>
<text transform="translate(495.9,611.2) scale(1,1.07)" text-anchor="middle" fill="#7c7cb4">=</text>
<text transform="translate(531.9,611.2) scale(1,1.07)" text-anchor="middle" fill="#7c7cb4">=</text>
<text transform="translate(567.9,611.2) scale(1,1.07)" text-anchor="middle" fill="#7c7cb4">=</text>
<text transform="translate(603.9,611.2) scale(1,1.07)" text-anchor="middle" fill="#7c7cb4">=</text>
<text transform="translate(639.9,611.2) scale(1,1.07)" text-anchor="middle" fill="#7c7cb4">=</text>
<text transform="translate(675.9,611.2) scale(1,1.07)" text-anchor="middle" fill="#7c7cb4">=</text>
<text transform="translate(711.9,611.2) scale(1,1.07)" text-anchor="middle" fill="#7c7cb4">=</text>
<text transform="translate(747.9,611.2) scale(1,1.07)" text-anchor="middle" fill="#7c7cb4">=</text>
<text transform="translate(783.9,611.2) scale(1,1.07)" text-anchor="middle" fill="#7c7cb4">=</text>
<text transform="translate(819.9,611.2) scale(1,1.07)" text-anchor="middle" fill="#7c7cb4">=</text>
<text transform="translate(855.9,611.2) scale(1,1.07)" text-anchor="middle" fill="#7c7cb4">=</text>
<text transform="translate(891.9,611.2) scale(1,1.07)" text-anchor="middle" fill="#7c7cb4">=</text>
<text transform="translate(927.9,611.2) scale(1,1.07)" text-anchor="middle" fill="#7c7cb4">=</text>
<text transform="translate(441.5,625.8) scale(1,1.07)" fill="#000" textLength="222.7" lengthAdjust="spacingAndGlyphs">Repeating Elements by RepeatMasker</text>
<text transform="translate(68.0,640) scale(1,1.07)" fill="#000" textLength="84.2" lengthAdjust="spacingAndGlyphs">RepeatMasker</text>
</svg>
</body></html>
